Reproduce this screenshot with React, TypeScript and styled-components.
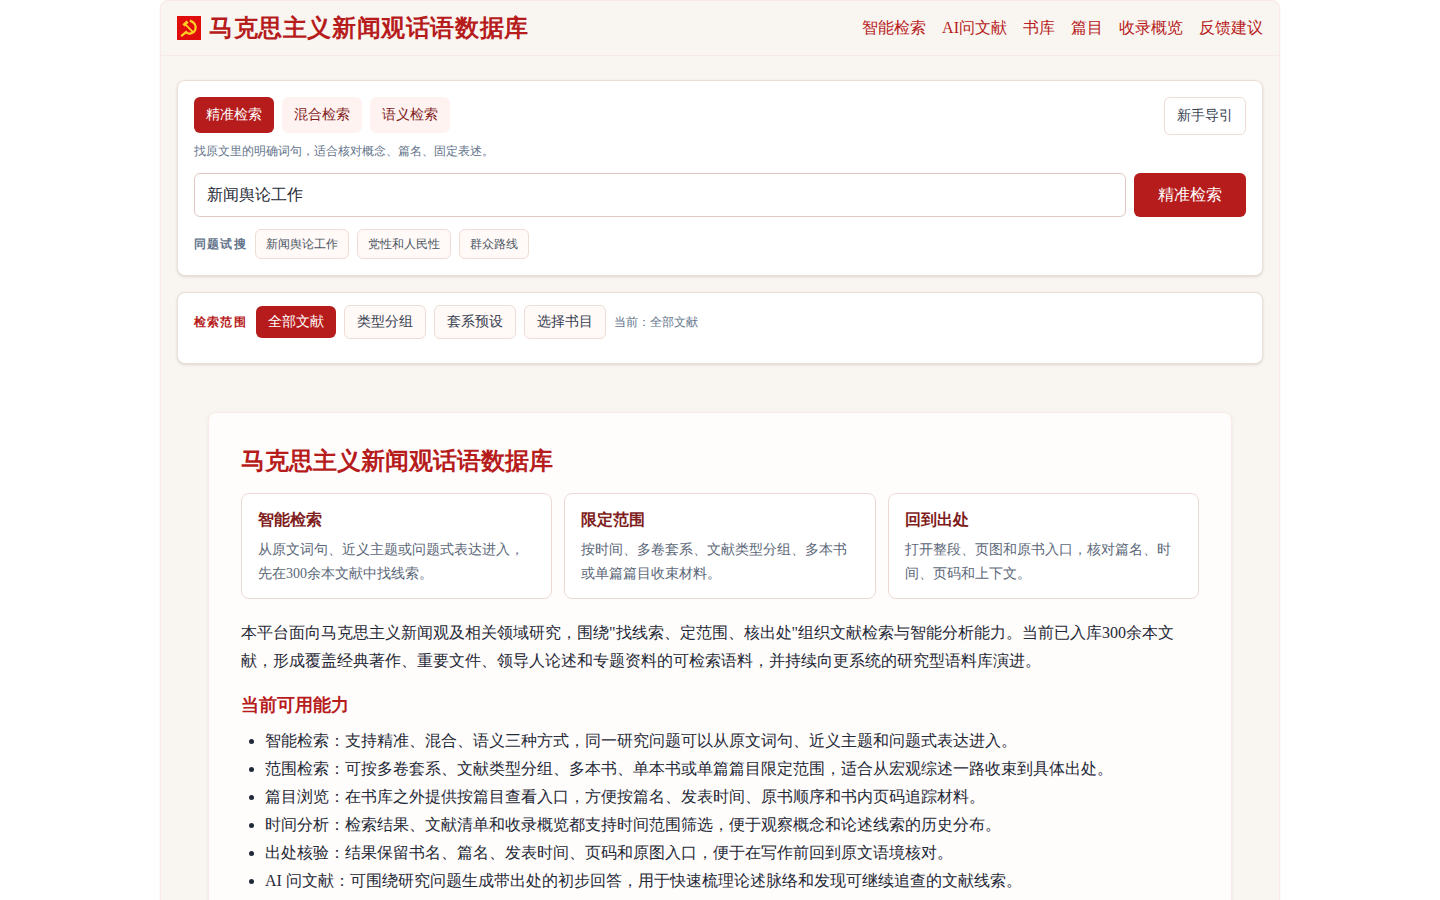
import React from 'react';
import styled, { createGlobalStyle } from 'styled-components';

const GlobalStyle = createGlobalStyle`
  html, body { margin: 0; padding: 0; height: 900px; overflow: hidden; background: #fff; }
  body { font-family: "Liberation Serif", serif; color: #1f2937; }
  * { box-sizing: border-box; }
`;

const Shell = styled.div`
  width: 1120px;
  margin: 0 auto;
  height: 900px;
  overflow: hidden;
  background: #f9f5f1;
  border: 1px solid #fbe9e7;
  border-bottom: 0;
  border-radius: 8px 8px 0 0;
  box-shadow: 0 1px 3px rgba(0, 0, 0, 0.05);
`;

const Header = styled.header`
  height: 55px;
  padding: 0 16px;
  display: flex;
  align-items: center;
  justify-content: space-between;
  border-bottom: 1px solid #f6ebe6;
`;

const Brand = styled.div`
  display: flex;
  align-items: center;
  gap: 8px;
  font-size: 24px;
  font-weight: 700;
  letter-spacing: 0.6px;
  color: #b71c1c;
`;

const Nav = styled.nav`
  display: flex;
  gap: 16px;
`;

const NavLink = styled.a`
  font-size: 16px;
  color: #b71c1c;
`;

const Main = styled.main`
  padding: 24px 16px 0;
  display: flex;
  flex-direction: column;
`;

const Panel = styled.section`
  background: #fff;
  border: 1px solid #eeddd6;
  border-radius: 8px;
  box-shadow: 0 1px 3px rgba(0, 0, 0, 0.12);
`;

const SearchPanel = styled(Panel)`
  height: 196px;
  padding: 16px;
`;

const ScopePanel = styled(Panel)`
  height: 72px;
  margin-top: 16px;
  padding: 12px 16px;
  display: flex;
  align-items: flex-start;
  gap: 8px;
`;

const ModeRow = styled.div`
  display: flex;
  gap: 8px;
`;

const TopRow = styled.div`
  display: flex;
  justify-content: space-between;
  align-items: flex-start;
`;

const ModeTab = styled.button<{ $active?: boolean }>`
  width: 80px;
  height: 36px;
  border: 0;
  border-radius: 6px;
  font: 14px "Liberation Serif", serif;
  background: ${p => (p.$active ? '#b71c1c' : '#fff3f1')};
  color: ${p => (p.$active ? '#fff' : '#7f1d1d')};
`;

const GuideButton = styled.button`
  width: 82px;
  height: 38px;
  background: #fff;
  border: 1px solid #eeddd6;
  border-radius: 6px;
  font: 14px "Liberation Serif", serif;
  color: #374151;
`;

const Hint = styled.p`
  margin: 7px 0 0;
  height: 18px;
  line-height: 18px;
  font-size: 12px;
  color: #64748b;
`;

const SearchRow = styled.div`
  display: flex;
  gap: 8px;
  margin-top: 13px;
`;

const SearchInput = styled.input`
  flex: 1;
  height: 44px;
  padding: 0 12px;
  border: 1px solid #dfc9c1;
  border-radius: 6px;
  background: #fff;
  font: 16px "Liberation Serif", serif;
  color: #1f2937;
`;

const SearchButton = styled.button`
  width: 112px;
  height: 44px;
  border: 0;
  border-radius: 6px;
  background: #b71c1c;
  color: #fff;
  font: 16px "Liberation Serif", serif;
`;

const ChipRow = styled.div`
  display: flex;
  align-items: center;
  gap: 8px;
  margin-top: 12px;
`;

const ChipLabel = styled.span`
  font-size: 12px;
  font-weight: 700;
  letter-spacing: 1.2px;
  color: #64748b;
`;

const Chip = styled.button`
  height: 30px;
  padding: 0 10px;
  background: #fff9f7;
  border: 1px solid #eeddd6;
  border-radius: 6px;
  font: 12px "Liberation Serif", serif;
  color: #4b5563;
`;

const ScopeLabel = styled(ChipLabel)`
  color: #b71c1c;
  line-height: 34px;
`;

const ScopeButton = styled.button<{ $active?: boolean }>`
  width: ${p => (p.$active ? '80px' : '82px')};
  height: ${p => (p.$active ? '32px' : '34px')};
  margin: ${p => (p.$active ? '1px 0 0 1px' : '0')};
  border: ${p => (p.$active ? '0' : '1px solid #eeddd6')};
  border-radius: 6px;
  background: ${p => (p.$active ? '#b71c1c' : '#fff9f7')};
  color: ${p => (p.$active ? '#fff' : '#374151')};
  font: 14px "Liberation Serif", serif;
`;

const ScopeNote = styled.span`
  font-size: 12px;
  line-height: 34px;
  color: #64748b;
`;

const Intro = styled.article`
  margin: 48px 31px 0;
  padding: 32px;
  background: #fffdfc;
  border: 1px solid #f8ece8;
  border-radius: 8px;
  box-shadow: 0 1px 4px rgba(0, 0, 0, 0.06);
`;

const IntroTitle = styled.h1`
  margin: 0;
  height: 32px;
  line-height: 32px;
  font-size: 24px;
  font-weight: 700;
  color: #b71c1c;
`;

const FeatureGrid = styled.div`
  display: grid;
  grid-template-columns: repeat(3, 1fr);
  gap: 12px;
  margin-top: 16px;
`;

const FeatureCard = styled.div`
  height: 106px;
  padding: 14px 16px;
  background: #fff;
  border: 1px solid #ecd9d4;
  border-radius: 8px;
`;

const FeatureTitle = styled.h3`
  margin: 0;
  font-size: 16px;
  line-height: 24px;
  font-weight: 700;
  color: #7f1d1d;
`;

const FeatureText = styled.p`
  margin: 6px 0 0;
  font-size: 14px;
  line-height: 24px;
  color: #5b6779;
`;

const Lead = styled.p`
  margin: 20px 0 0;
  max-width: 940px;
  font-size: 16px;
  line-height: 28px;
  color: #1f2937;
`;

const SectionTitle = styled.h2`
  margin: 16px 0 0;
  font-size: 18px;
  line-height: 28px;
  font-weight: 700;
  color: #b71c1c;
`;

const List = styled.ul`
  margin: 8px 0 0;
  padding-left: 24px;
`;

const Item = styled.li`
  font-size: 16px;
  line-height: 28px;
  color: #1f2937;
`;

// hammer and sickle, traced from the reference
const FlagIcon = () => (
  <svg width="24" height="24" viewBox="0 0 24 24">
    <rect width="24" height="24" fill="#e00d0d" />
    <g fill="none" stroke="#ffcf24">
      <path d="M12.8 4.6c4.4 1.2 7 5.2 5.4 9.4-1.6 3.8-6.2 4.6-9.8 2.2" strokeWidth="2.2" />
      <path d="M8.8 8.8l7.2 7.4" strokeWidth="1.8" strokeLinecap="round" />
      <path d="M6.4 9.4l4.2-3.8" strokeWidth="3" />
      <path d="M4.8 19.6l4.4-3.8" strokeWidth="2.2" strokeLinecap="round" />
    </g>
  </svg>
);

const navItems = ['智能检索', 'AI问文献', '书库', '篇目', '收录概览', '反馈建议'];
const samples = ['新闻舆论工作', '党性和人民性', '群众路线'];
const features = [
  { title: '智能检索', text: '从原文词句、近义主题或问题式表达进入，先在300余本文献中找线索。' },
  { title: '限定范围', text: '按时间、多卷套系、文献类型分组、多本书或单篇篇目收束材料。' },
  { title: '回到出处', text: '打开整段、页图和原书入口，核对篇名、时间、页码和上下文。' },
];
const abilities = [
  '智能检索：支持精准、混合、语义三种方式，同一研究问题可以从原文词句、近义主题和问题式表达进入。',
  '范围检索：可按多卷套系、文献类型分组、多本书、单本书或单篇篇目限定范围，适合从宏观综述一路收束到具体出处。',
  '篇目浏览：在书库之外提供按篇目查看入口，方便按篇名、发表时间、原书顺序和书内页码追踪材料。',
  '时间分析：检索结果、文献清单和收录概览都支持时间范围筛选，便于观察概念和论述线索的历史分布。',
  '出处核验：结果保留书名、篇名、发表时间、页码和原图入口，便于在写作前回到原文语境核对。',
  'AI 问文献：可围绕研究问题生成带出处的初步回答，用于快速梳理论述脉络和发现可继续追查的文献线索。',
];

export default function App() {
  return (
    <>
      <GlobalStyle />
      <Shell>
        <Header>
          <Brand>
            <FlagIcon />
            马克思主义新闻观话语数据库
          </Brand>
          <Nav>
            {navItems.map(n => <NavLink key={n}>{n}</NavLink>)}
          </Nav>
        </Header>
        <Main>
          <SearchPanel>
            <TopRow>
              <ModeRow>
                <ModeTab $active>精准检索</ModeTab>
                <ModeTab>混合检索</ModeTab>
                <ModeTab>语义检索</ModeTab>
              </ModeRow>
              <GuideButton>新手导引</GuideButton>
            </TopRow>
            <Hint>找原文里的明确词句，适合核对概念、篇名、固定表述。</Hint>
            <SearchRow>
              <SearchInput defaultValue="新闻舆论工作" />
              <SearchButton>精准检索</SearchButton>
            </SearchRow>
            <ChipRow>
              <ChipLabel>同题试搜</ChipLabel>
              {samples.map(s => <Chip key={s}>{s}</Chip>)}
            </ChipRow>
          </SearchPanel>
          <ScopePanel>
            <ScopeLabel>检索范围</ScopeLabel>
            <ScopeButton $active>全部文献</ScopeButton>
            <ScopeButton>类型分组</ScopeButton>
            <ScopeButton>套系预设</ScopeButton>
            <ScopeButton>选择书目</ScopeButton>
            <ScopeNote>当前：全部文献</ScopeNote>
          </ScopePanel>
          <Intro>
            <IntroTitle>马克思主义新闻观话语数据库</IntroTitle>
            <FeatureGrid>
              {features.map(f => (
                <FeatureCard key={f.title}>
                  <FeatureTitle>{f.title}</FeatureTitle>
                  <FeatureText>{f.text}</FeatureText>
                </FeatureCard>
              ))}
            </FeatureGrid>
            <Lead>本平台面向马克思主义新闻观及相关领域研究，围绕"找线索、定范围、核出处"组织文献检索与智能分析能力。当前已入库300余本文献，形成覆盖经典著作、重要文件、领导人论述和专题资料的可检索语料，并持续向更系统的研究型语料库演进。</Lead>
            <SectionTitle>当前可用能力</SectionTitle>
            <List>
              {abilities.map(a => <Item key={a}>{a}</Item>)}
            </List>
          </Intro>
        </Main>
      </Shell>
    </>
  );
}
